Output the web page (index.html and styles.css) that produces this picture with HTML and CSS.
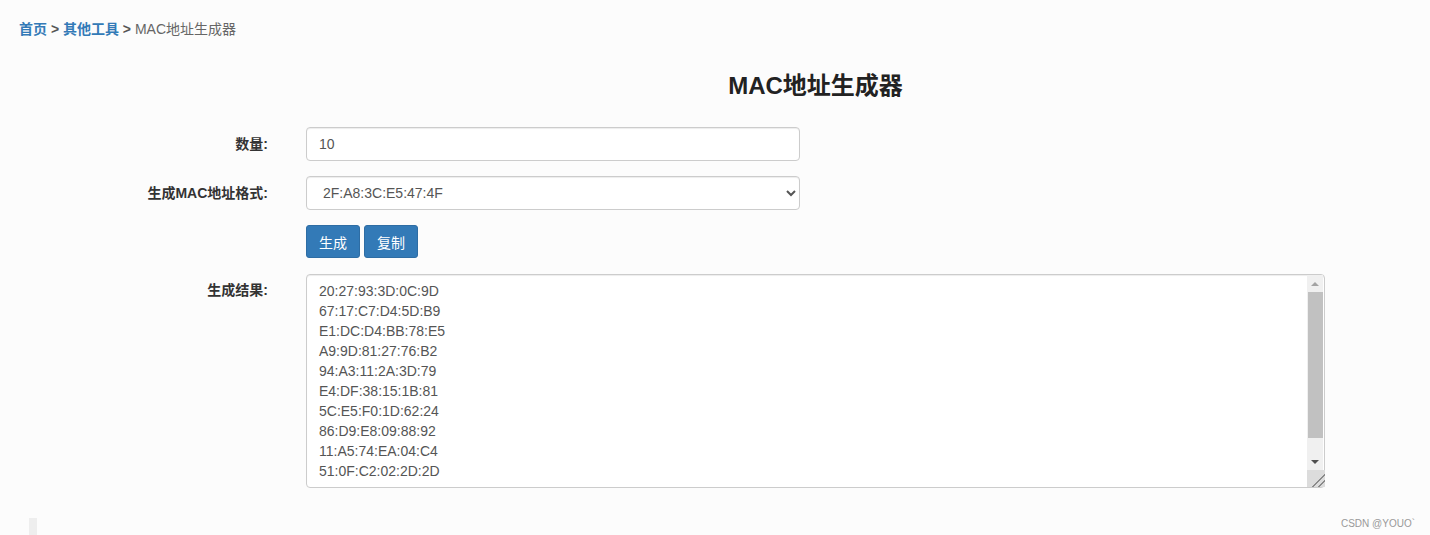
FILE: index.html
```html
<!DOCTYPE html>
<html>
    <head>
        <meta charset="utf-8" />
        <title>MAC地址生成器</title>
        <link rel="stylesheet" href="styles.css">
    </head>
    <body>
        <div class="crumbs">
            <a href="#">首页</a> &gt; <a href="#">其他工具</a> &gt; <span class="current">MAC地址生成器</span>
        </div>
        <div class="page">
            <h1 class="title">MAC地址生成器</h1>
            <form class="form">
                <label class="label">数量:</label>
                <div class="field"><input class="control short" type="text" value="10"></div>

                <label class="label">生成MAC地址格式:</label>
                <div class="field">
                    <select class="control short">
                        <option>2F:A8:3C:E5:47:4F</option>
                        <option>2F-A8-3C-E5-47-4F</option>
                        <option>2FA83CE5474F</option>
                    </select>
                </div>

                <div></div>
                <div class="field buttons">
                    <button type="button" class="btn">生成</button>
                    <button type="button" class="btn">复制</button>
                </div>

                <label class="label">生成结果:</label>
                <div class="field result-wrap">
                    <textarea class="control result">20:27:93:3D:0C:9D
67:17:C7:D4:5D:B9
E1:DC:D4:BB:78:E5
A9:9D:81:27:76:B2
94:A3:11:2A:3D:79
E4:DF:38:15:1B:81
5C:E5:F0:1D:62:24
86:D9:E8:09:88:92
11:A5:74:EA:04:C4
51:0F:C2:02:2D:2D
</textarea>
                    <!-- 滚动条 -->
                    <div class="scrollbar">
                        <div class="sb-btn"><span class="arrow-up"></span></div>
                        <div class="sb-track"><div class="sb-thumb"></div></div>
                        <div class="sb-btn"><span class="arrow-down"></span></div>
                        <div class="sb-corner"></div>
                    </div>
                </div>
            </form>
        </div>
        <div class="footer">
            <div class="quote"></div>
            <span class="mark">CSDN @YOUO`</span>
        </div>
    </body>
</html>
```

FILE: styles.css
```css
html, body {
    margin: 0;
    background: #fcfcfc;
}
body {
    font-family: "Liberation Sans", Arial, "Noto Sans CJK SC", sans-serif;
    font-size: 14px;
    color: #333333;
    width: 1430px;
    height: 535px;
    overflow: hidden;
}
.crumbs {
    padding: 19px 19px 0;
    font-size: 14px;
    line-height: 20px;
    font-weight: bold;
    color: #555555;
}
.crumbs a {
    color: #337ab7;
    text-decoration: none;
}
.crumbs .current {
    font-weight: normal;
    color: #666666;
}
.page {
    width: 1325px;
}
.title {
    margin: 0;
    padding: 31px 0 0 306px;
    text-align: center;
    font-size: 24px;
    line-height: 32px;
    font-weight: bold;
    color: #222222;
}
.form {
    display: grid;
    grid-template-columns: 268px 1fr;
    column-gap: 38px;
    row-gap: 15px;
    margin-top: 25px;
}
.label {
    text-align: right;
    font-size: 14px;
    font-weight: bold;
    line-height: 34px;
    color: #333333;
}
.field {
    display: flex;
}
.control {
    box-sizing: border-box;
    height: 34px;
    padding: 6px 12px;
    font-family: "Liberation Sans", Arial, "Noto Sans CJK SC", sans-serif;
    font-size: 14px;
    color: #555555;
    background: #ffffff;
    border: 1px solid #cccccc;
    border-radius: 4px;
    box-shadow: inset 0 1px 1px rgba(0, 0, 0, 0.075);
}
.short {
    width: 494px;
}
.buttons {
    gap: 4px;
}
.btn {
    box-sizing: border-box;
    width: 54px;
    height: 33px;
    padding: 0;
    font-family: "Liberation Sans", Arial, "Noto Sans CJK SC", sans-serif;
    font-size: 14px;
    color: #ffffff;
    background: #337ab7;
    border: 1px solid #2e6da4;
    border-radius: 3px;
}
.result-wrap {
    position: relative;
    width: 1019px;
    margin-top: 1px;
}
.result {
    width: 1019px;
    height: 214px;
    line-height: 20px;
    resize: none;
    overflow: hidden;
}
.scrollbar {
    position: absolute;
    top: 1px;
    right: 2px;
    bottom: 1px;
    width: 16px;
    display: flex;
    flex-direction: column;
    background: #f0f0f0;
}
.sb-btn {
    height: 17px;
    display: flex;
    align-items: center;
    justify-content: center;
}
.arrow-up {
    border-left: 4px solid transparent;
    border-right: 4px solid transparent;
    border-bottom: 4px solid #a3a3a3;
}
.arrow-down {
    border-left: 4px solid transparent;
    border-right: 4px solid transparent;
    border-top: 4px solid #505050;
}
.sb-track {
    flex: 1;
    padding-left: 1px;
}
.sb-thumb {
    height: 146px;
    background: #c1c1c1;
}
.sb-corner {
    height: 17px;
    margin-right: -2px;
    background:
        linear-gradient(135deg, transparent 62%, #8a8a8a 62%, #8a8a8a 67%, transparent 67%, transparent 78%, #8a8a8a 78%, #8a8a8a 83%, transparent 83%),
        #dcdcdc;
}
.footer {
    display: flex;
    justify-content: space-between;
    align-items: flex-start;
    margin-top: 30px;
    padding: 0 15px 0 29px;
}
.quote {
    width: 8px;
    height: 17px;
    background: #eeeeee;
}
.mark {
    font-size: 10px;
    color: #999999;
}
```
